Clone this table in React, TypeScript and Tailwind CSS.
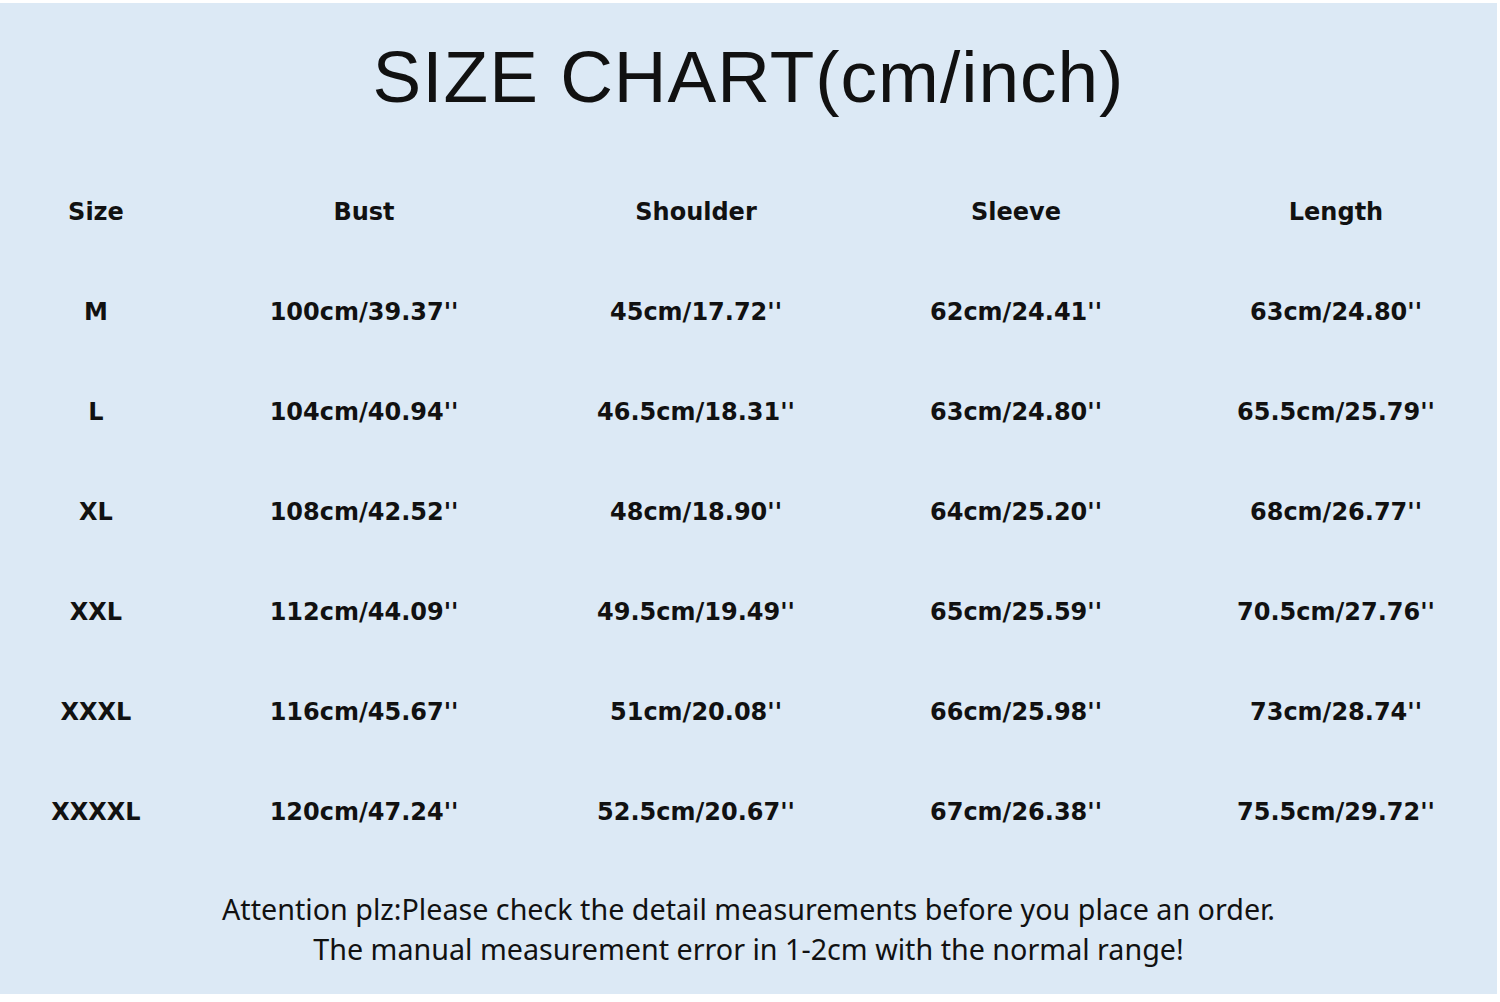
const headers = ["Size", "Bust", "Shoulder", "Sleeve", "Length"];

const rows = [
  ["M", "100cm/39.37''", "45cm/17.72''", "62cm/24.41''", "63cm/24.80''"],
  ["L", "104cm/40.94''", "46.5cm/18.31''", "63cm/24.80''", "65.5cm/25.79''"],
  ["XL", "108cm/42.52''", "48cm/18.90''", "64cm/25.20''", "68cm/26.77''"],
  ["XXL", "112cm/44.09''", "49.5cm/19.49''", "65cm/25.59''", "70.5cm/27.76''"],
  ["XXXL", "116cm/45.67''", "51cm/20.08''", "66cm/25.98''", "73cm/28.74''"],
  ["XXXXL", "120cm/47.24''", "52.5cm/20.67''", "67cm/26.38''", "75.5cm/29.72''"],
];

function Row({ cells }: { cells: string[] }) {
  return (
    <div className="grid grid-cols-[192px_344px_320px_320px_320px] h-[100px] items-center">
      {cells.map((c, i) => (
        <div key={i} className="text-center text-[24px] font-bold text-[#111]">
          {c}
        </div>
      ))}
    </div>
  );
}

export default function App() {
  return (
    <div className="w-[1500px] h-[1002px] bg-white pt-[3px] pr-[3px] pb-[8px]">
      <div className="h-full bg-[#dce9f5] flex flex-col pt-[38px] [font-family:'DejaVu_Sans',sans-serif]">
        <div className="text-center text-[73px] leading-[72px] tracking-[1px] text-[#111] [font-family:'Liberation_Sans',sans-serif]">
          SIZE CHART(cm/inch)
        </div>
        <div className="mt-[49px] flex flex-col">
          <Row cells={headers} />
          {rows.map((r) => (
            <Row key={r[0]} cells={r} />
          ))}
        </div>
        <div className="mt-[27px] text-center text-[28.7px] leading-[40px] text-[#111] [font-family:'Noto_Sans',sans-serif]">
          <div>Attention plz:Please check the detail measurements before you place an order.</div>
          <div>The manual measurement error in 1-2cm with the normal range!</div>
        </div>
      </div>
    </div>
  );
}
